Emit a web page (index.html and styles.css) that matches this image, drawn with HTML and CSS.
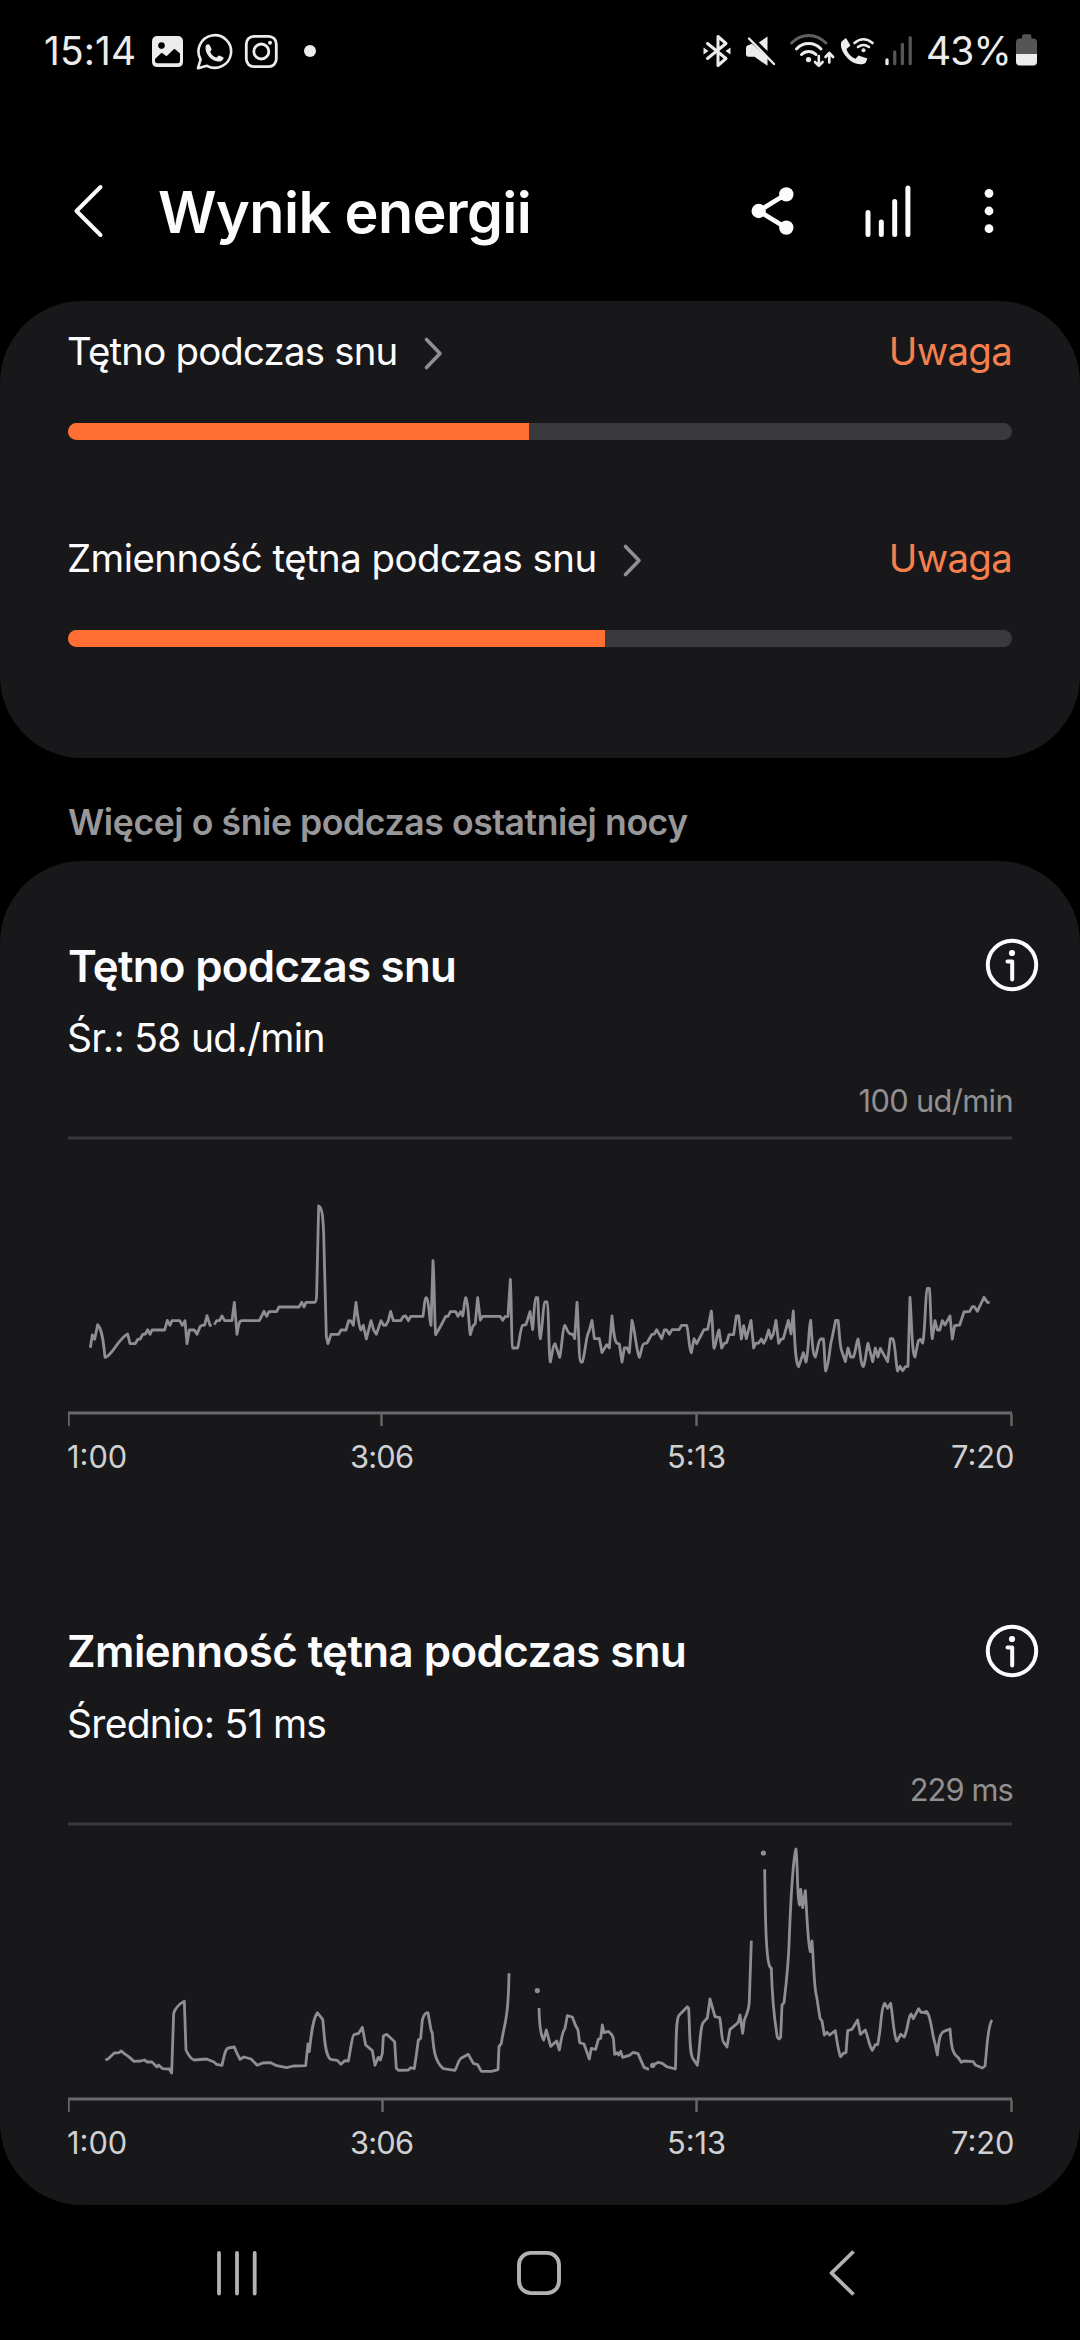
FILE: index.html
```html
<!DOCTYPE html>
<html lang="pl">
<head>
<meta charset="utf-8">
<title>Wynik energii</title>
<link rel="stylesheet" href="styles.css">
</head>
<body>
<div class="screen">
  <div class="status">
    <span class="time">15:14</span>
    <svg class="s-photo" width="32" height="38" viewBox="152 32 32 38"><path fill="#ececec" fill-rule="evenodd" d="M157.500 36H177.500Q183 36 183 41.500V61.500Q183 67 177.500 67H157.500Q152 67 152 61.500V41.500Q152 36 157.500 36ZM161.500 42.300A3.300 3.300 0 1 0 161.500 48.900A3.300 3.300 0 1 0 161.500 42.300ZM155 59V61Q155 63.300 157.500 63.300H177.500Q180 63.300 180 61V53.500L175.500 49.500Q174.500 48.700 173.500 49.600L166.500 56.300L162.500 53.200Q161.700 52.600 161 53.200Z"/></svg>
    <svg class="s-wa" width="37" height="38" viewBox="196 32 37 38"><path fill="none" stroke="#ececec" stroke-width="2.600" stroke-linejoin="round" d="M198 68.200L200.600 59.500A16.300 16.300 0 1 1 207 65.800Z"/><path fill="#ececec" d="M205.600 46.200C206.500 44.200 208.800 43.600 209.900 45.500L211.500 48.800C212 50 210.200 51.300 210.300 52.200C211.500 54.700 213.600 56.600 216.200 57.600C217.200 57.400 218 55.500 219.200 55.400L223.200 57.200C224.500 58.300 222.200 61.200 219.500 61.600C212 62 204.300 53.500 205.600 46.200Z"/></svg>
    <svg class="s-ig" width="34" height="38" viewBox="244 32 34 38"><g fill="none" stroke="#ececec" stroke-width="2.800"><rect x="246.300" y="36.400" width="30" height="30.200" rx="7.500"/><circle cx="261.300" cy="51.500" r="7.500"/></g><circle cx="270" cy="42.800" r="2" fill="#ececec"/></svg>
    <i class="more-dot"></i>
    <svg class="s-bt" width="28" height="38" viewBox="703 32 28 38"><path fill="none" stroke="#ececec" stroke-width="3" stroke-linejoin="round" stroke-linecap="round" d="M707.500 43.500L726 58.500L718 65.500V36.500L726 43.500L707.500 58.500"/><path fill="#ececec" d="M703.500 47.500L708.500 51L703.500 54.500ZM730.500 47.500L725.500 51L730.500 54.500Z"/></svg>
    <svg class="s-mute" width="30" height="38" viewBox="746 32 30 38"><path fill="#ececec" d="M767.500 36.500V51L758.800 42.500ZM747.500 45.500Q746 46 746 48V54.500Q746 56.800 748.300 56.800H754.500L767.500 65.800V58L752 43.800Z"/><path stroke="#ececec" stroke-width="2.400" stroke-linecap="round" d="M749 38.500L774 64"/></svg>
    <svg class="s-wifi" width="47" height="38" viewBox="789 32 47 38"><g fill="none" stroke-width="3" stroke-linecap="round"><path stroke="#606060" d="M791.500 43Q799 35.500 808.700 35.500T826 43"/><path stroke="#ececec" d="M796.500 49Q801.500 43.500 808.700 43.500T821 49M801.500 54.500Q804.500 51.500 808.700 51.500T816 54.500"/></g><circle cx="808.500" cy="59.600" r="2.600" fill="#ececec"/><path fill="none" stroke="#ececec" stroke-width="2.600" stroke-linecap="round" stroke-linejoin="round" d="M818.800 56V65.500M815 62L818.800 65.800L822.600 62M829.300 62.500V53.500M825.500 57L829.300 53L833.100 57"/></svg>
    <svg class="s-call" width="35" height="38" viewBox="840 32 35 38"><path fill="#ececec" d="M841.500 41.500L846 38L850.500 45.500L846.500 49C848 54 851 57 855.500 58.800L858.500 55.500L867.500 58.500L865.500 63C862 65.500 855 64.500 849.500 60C843 54.500 839.500 47 841.500 41.500Z"/><g fill="none" stroke="#ececec" stroke-width="2.600" stroke-linecap="round"><path d="M854.500 43Q863.500 35.500 872.500 43M858 47Q863.500 43 869 47"/></g><circle cx="863.500" cy="50.300" r="2" fill="#ececec"/></svg>
    <svg class="s-signal" width="28" height="38" viewBox="885 32 28 38"><g fill="none" stroke-width="3.300" stroke-linecap="round"><path stroke="#ececec" d="M887 60V63.700"/><path stroke="#555" d="M894.700 52V63.700M902.400 44.300V63.700M910.200 37.700V63.700"/></g></svg>
    <span class="percent">43%</span>
    <svg class="s-bat" width="22" height="38" viewBox="1016 32 22 38"><path fill="#555" d="M1022 36.500Q1022 34.200 1024 34.200H1029.500Q1031.400 34.200 1031.400 36.500V38.500H1034Q1037 39 1037 42V62Q1037 66 1033 66H1020Q1016 66 1016 62V42Q1016 39 1019 38.500H1022Z"/><path fill="#ececec" d="M1016 54H1037V61.500Q1037 65.300 1033 65.300H1020Q1016 65.300 1016 61.500Z"/></svg>
  </div>

  <header class="header">
    <svg class="back" width="34" height="60" viewBox="72 181 34 60"><path d="M100.500 187L76.500 211L100.500 235" fill="none" stroke="#fcfcff" stroke-width="4" stroke-linecap="round" stroke-linejoin="round"/></svg>
    <h1>Wynik energii</h1>
    <svg class="share" width="44" height="60" viewBox="751 181 44 60"><path d="M786 194.300L758.700 211L786 227.700" fill="none" stroke="#fcfcff" stroke-width="4.600"/><g fill="#fcfcff"><circle cx="758.700" cy="211" r="7.200"/><circle cx="786.300" cy="194.400" r="7.200"/><circle cx="786.300" cy="227.600" r="7.200"/></g></svg>
    <svg class="trend" width="46" height="60" viewBox="865 181 46 60"><path d="M868 212.500V234.500M881.300 222V234.500M894.700 201.500V234.500M907.900 188V234.500" fill="none" stroke="#fcfcff" stroke-width="5" stroke-linecap="round"/></svg>
    <svg class="menu" width="12" height="60" viewBox="983 181 12 60"><g fill="#fcfcff"><circle cx="989" cy="193.300" r="4.400"/><circle cx="989" cy="211" r="4.400"/><circle cx="989" cy="228.700" r="4.400"/></g></svg>
  </header>

  <section class="card factors">
    <div class="factor">
      <div class="factor-row"><span class="factor-name first">Tętno podczas snu</span><svg width="22" height="40" viewBox="0 0 22 40"><path class="chevron" d="M3.500 6.500L17 20.500L3.500 34.500"/></svg><span class="state">Uwaga</span></div>
      <div class="track"><div class="fill" style="width:461px"></div></div>
    </div>
    <div class="factor">
      <div class="factor-row"><span class="factor-name">Zmienność tętna podczas snu</span><svg width="22" height="40" viewBox="0 0 22 40"><path class="chevron" d="M3.500 6.500L17 20.500L3.500 34.500"/></svg><span class="state">Uwaga</span></div>
      <div class="track"><div class="fill" style="width:537px"></div></div>
    </div>
  </section>

  <h2 class="section-title">Więcej o śnie podczas ostatniej nocy</h2>

  <section class="card details">
    <article class="metric">
      <div class="metric-head"><h3>Tętno podczas snu</h3>
        <svg width="54" height="54" viewBox="0 0 54 54"><circle cx="27" cy="27" r="24.200" fill="none" stroke="#fcfcff" stroke-width="4"/><circle cx="27" cy="15" r="3.100" fill="#fcfcff"/><path d="M22.500 23.500H27.200V41.500" fill="none" stroke="#fcfcff" stroke-width="4" stroke-linecap="round" stroke-linejoin="round"/></svg></div>
      <p class="average">Śr.: 58 ud./min</p>
      <p class="maximum">100 ud/min</p>
      <svg class="chart" width="945" height="310" viewBox="68 1121 945 310">
        <path class="grid" d="M68 1138H1012"/>
        <path class="axis" d="M68 1413H1012"/>
        <path class="tick" d="M68.500 1414V1426M381.500 1414V1426M696.500 1414V1426M1011.500 1414V1426"/>
        <g class="line">
          <path transform="translate(60 1180) scale(.33333)" d="M91 503L97 465L104 478L113 434C125 445 130 480 135 532C155 530 175 475 203 462L210 491H226L233 478L241 477L248 463L256 462L263 449L270 463L276 450H314L322 421L330 436L336 422H359L367 436L375 422L381 491L388 450H403L411 463L420 440L426 436L434 435L441 407L450 436L455 437M463 434L470 422H479L486 408L494 422H516L523 367L531 463C536 430 538 422 545 422H598L612 394L620 409L627 395H650L657 381H717L725 367L732 381L738 367H764C768 367 770 360 770 340L776 78C786 80 789 110 791 160L799 470L804 491L813 463H836L843 450H858L866 422L873 423L880 436L888 367C892 400 896 440 903 450L910 436L919 477L933 422L941 450L949 463L963 422L971 436L978 435L985 422L992 394L1000 422H1021"/>
          <path transform="translate(400 1220) scale(.33333)" d="M-1 302H2L10 289L17 288L25 302L32 289H69C73 260 74 233 79 233C88 240 86 290 93 316L99 122C104 200 103 300 107 344L120 322L137 289H144L151 275H167L174 289L182 275L188 288C192 270 194 235 197 233C206 245 206 320 211 344L218 320L226 310L233 233L241 300L248 289H301L308 301L315 290L324 289L331 178C335 240 334 380 338 384H353C358 365 362 320 368 316L378 314L390 275L398 329C402 290 403 235 408 233H413C416 260 416 350 421 356C428 320 430 247 434 246H441C447 250 445 400 451 426C457 405 458 372 465 371L479 412C486 385 488 318 494 316C500 322 503 342 512 342L519 343L524 356L531 247C537 330 536 425 543 426H547C556 400 558 345 567 334L576 301L583 356H598L606 398L620 374L628 384L636 288C641 340 644 368 652 370L658 372L666 426L673 384H681L688 398L696 301C705 330 710 400 718 412C724 400 725 371 733 371L741 369L755 344L763 342L770 329L785 356L793 330H800L808 343L816 329H837L845 316H860C866 335 868 395 874 398L882 356L890 371L901 350"/>
          <path transform="translate(700 1260) scale(.33333)" d="M0 232L12 209L23 208L34 153C38 180 39 262 42 265C48 260 52 212 57 210L65 264L73 250L80 248L87 224H101L109 168H116L124 237L131 197L139 236L153 181L161 264L167 250L176 249L184 237L191 250L198 237L206 210L213 236L220 222L228 181L236 250L243 238L250 236L265 181L273 222L280 153C284 230 285 310 296 320L310 278L318 306C326 280 327 185 332 181C336 230 338 290 346 291C354 270 354 240 362 237H370C374 260 374 330 377 333C390 300 388 260 396 235L407 181H414C418 200 418 260 426 275L436 305L444 264L452 291H460C468 275 470 240 474 237C480 260 482 318 490 320C498 305 500 252 504 250L518 305L526 264L534 291L541 265L563 305L571 236H578C586 245 588 325 593 333L600 319L608 332L616 320L624 319L630 112C636 200 636 285 645 291L655 242L661 238L668 249C676 220 676 90 682 85H688C692 110 692 220 697 236L705 182L712 210H719L727 182L735 195L742 182L750 168L757 237L764 197L779 195L792 156L809 154L817 140H823L832 154L852 112L862 127L869 128"/>
        </g>
      </svg>
      <div class="hours"><span>1:00</span><span>3:06</span><span>5:13</span><span>7:20</span></div>
    </article>

    <article class="metric variability">
      <div class="metric-head"><h3>Zmienność tętna podczas snu</h3>
        <svg width="54" height="54" viewBox="0 0 54 54"><circle cx="27" cy="27" r="24.200" fill="none" stroke="#fcfcff" stroke-width="4"/><circle cx="27" cy="15" r="3.100" fill="#fcfcff"/><path d="M22.500 23.500H27.200V41.500" fill="none" stroke="#fcfcff" stroke-width="4" stroke-linecap="round" stroke-linejoin="round"/></svg></div>
      <p class="average">Średnio: 51 ms</p>
      <p class="maximum">229 ms</p>
      <svg class="chart" width="945" height="310" viewBox="68 1807 945 310">
        <path class="grid" d="M68 1824H1012"/>
        <path class="axis" d="M68 2099H1012"/>
        <path class="tick" d="M68.500 2100V2112M382.500 2100V2112M696.500 2100V2112M1011.500 2100V2112"/>
        <g class="line">
          <path transform="translate(60 1940) scale(.33333)" d="M136 360L144 357L163 339L177 338L184 333L192 340L206 350L222 364L242 363L253 360L262 366L276 366L291 381L296 375L308 386L328 387L335 399L341 220C344 210 355 193 373 184L378 330C385 345 393 357 402 360L440 357L462 366L470 373L486 376C492 350 496 325 505 324L523 321L529 336L540 358L552 351L573 357L592 376L608 369L632 368L650 377L680 383L700 378L737 377L744 312L748 335C753 290 757 240 772 218L788 238C793 270 792 345 812 358L832 361L843 373L854 362L865 363C872 330 876 286 882 284L896 280L907 262L917 315L937 332L945 376L955 352L961 360L967 340L970 288L980 283L1004 305L1009 385L1015 391L1045 390L1052 383L1063 386L1069 345L1075 300L1082 295L1087 240C1092 222 1096 218 1104 218L1113 270L1117 280C1120 320 1123 365 1150 386L1185 391C1192 380 1196 355 1206 353L1225 343L1240 370L1253 374L1264 394H1295L1314 389L1317 320L1324 310C1330 260 1345 250 1347 100"/>
          <path transform="translate(500 1820) scale(.33333)" d="M117 564C118 610 124 650 131 660L139 630L152 679L170 663L178 690C184 660 186 635 195 625L202 587L217 591L226 615L234 630L239 668L252 672L268 717L274 685L287 688L295 658L302 655L307 615L312 638L325 634C335 640 342 655 341 665L344 703L352 698L356 705L362 694L368 712L388 706L400 697L414 701L432 742L447 748M458 736L475 727L487 730L500 740L526 747C530 680 525 590 540 583L562 560L566 565C570 640 568 705 580 718L592 736C600 690 600 610 612 605L622 594L630 537L645 590L659 593C665 620 664 665 672 668L681 681L690 628L712 610L716 603L720 585L728 640L733 600C740 585 748 565 748 540L754 362"/>
          <path transform="translate(740 1820) scale(.33333)" d="M74 148C76 300 78 420 90 441L94 445C97 560 105 610 112 652L117 657L122 652L126 555L132 548C140 480 146 430 148 350C152 250 158 120 168 87C174 150 171 240 179 255L182 208L188 263L196 212C201 280 203 370 211 395L216 363C222 440 222 505 230 530L240 595L246 603L253 645L261 637L269 645L286 632C292 670 296 700 302 710L310 700L318 698L323 632L336 628L353 600L361 643L376 630C384 650 388 680 397 691L406 674L413 674C425 620 422 560 434 550L443 565L452 550C460 600 462 655 471 664L482 643L493 651C505 625 504 590 513 582L520 596L536 566L543 577H562C575 600 575 640 585 670L592 705C596 670 598 640 612 634L630 627C634 670 634 700 655 713L664 727L672 723L700 725L706 735L727 744L735 738C742 680 742 620 756 600"/>
        </g>
        <g fill="#8e8e93"><circle cx="537.300" cy="1990.600" r="2.600"/><circle cx="652.700" cy="2065.400" r="2.600"/><circle cx="763.400" cy="1853" r="2.600"/><circle cx="926" cy="2012.300" r="2.300"/></g>
      </svg>
      <div class="hours"><span>1:00</span><span>3:06</span><span>5:13</span><span>7:20</span></div>
    </article>
  </section>

  <nav class="navbar">
    <svg width="44" height="50" viewBox="215 2248 44 50"><path d="M219 2253V2293.500M237 2253V2293.500M254.700 2253V2293.500" fill="none" stroke="#b2b2b2" stroke-width="3.800" stroke-linecap="round"/></svg>
    <svg class="home" width="48" height="50" viewBox="515 2248 48 50"><rect x="519" y="2252.900" width="40" height="40.200" rx="12" fill="none" stroke="#b2b2b2" stroke-width="3.900"/></svg>
    <svg class="nav-back" width="30" height="50" viewBox="828 2248 30 50"><path d="M853.500 2251.500L831.500 2273L853.500 2294.500" fill="none" stroke="#b2b2b2" stroke-width="3.800" stroke-linejoin="round"/></svg>
  </nav>
</div>
</body>
</html>
```
FILE: styles.css
```css
* { box-sizing: border-box; }

body {
  margin: 0;
  background: #000;
  color: #fcfcff;
  font-family: Inter, Roboto, sans-serif;
}

h1, h2, h3, p { margin: 0; white-space: nowrap; }

svg { display: block; flex: none; }

.screen {
  width: 1080px;
  height: 2340px;
  display: flex;
  flex-direction: column;
  overflow: hidden;
}

/* Status bar */
.status {
  height: 102px;
  flex: none;
  display: flex;
  align-items: center;
  padding: 0 42px 0 44px;
  color: #ececec;
  font-size: 38.9px;
  line-height: 50px;
}
.time { width: 108px; letter-spacing: 0.1px; }
.s-wa { margin-left: 12px; }
.s-ig { margin-left: 11px; }
.more-dot { width: 12px; height: 12px; margin-left: 26px; border-radius: 50%; background: #ececec; }
.s-bt { margin-left: auto; }
.s-mute { margin-left: 15px; }
.s-wifi { margin-left: 13px; }
.s-call { margin-left: 4px; }
.s-signal { margin-left: 10px; }
.percent { width: 90px; margin-left: 13px; letter-spacing: -0.8px; }

/* App bar */
.header {
  height: 199px;
  flex: none;
  display: flex;
  align-items: center;
  padding: 19px 85px 0 72px;
}
.header h1 {
  margin-left: 52px;
  padding-top: 2px;
  font-size: 57.5px;
  line-height: 70px;
  font-weight: 600;
  letter-spacing: -0.57px;
}
.share { margin-left: auto; }
.trend { margin-left: 70px; }
.menu { margin-left: 72px; }

/* Cards */
.card {
  flex: none;
  background: #18181a;
  border-radius: 82px;
}

.factors { height: 457px; padding: 20px 68px 0; }
.factor + .factor { margin-top: 88px; }
.factor-row {
  height: 60px;
  display: flex;
  align-items: center;
  font-size: 38.4px;
}
.factor-name { margin-left: -1px; letter-spacing: -0.53px; }
.factor-name.first { letter-spacing: -0.8px; }
.factor-row svg { margin: 4px 0 0 25px; }
.chevron { fill: none; stroke: #909092; stroke-width: 3.6; stroke-linecap: round; stroke-linejoin: round; }
.state { margin-left: auto; color: #f5804e; letter-spacing: -0.7px; }
.track {
  height: 17px;
  margin-top: 42px;
  border-radius: 9px;
  background: #3a3a3c;
  overflow: hidden;
}
.fill { height: 100%; background: #ff6e33; }

.section-title {
  height: 103px;
  flex: none;
  padding: 26px 68px 0;
  color: #98989a;
  font-size: 35.6px;
  line-height: 77px;
  font-weight: 600;
  letter-spacing: -0.42px;
}

/* Sleep metrics */
.details { height: 1344px; padding: 74px 41px 0 68px; }
.variability { margin-top: 144px; }
.metric-head {
  height: 60px;
  display: flex;
  align-items: center;
  justify-content: space-between;
}
.metric-head h3 {
  padding-top: 3px;
  font-size: 43.8px;
  line-height: 56px;
  font-weight: 600;
  letter-spacing: -0.7px;
}
.variability h3 { padding-top: 2px; margin-left: -1px; letter-spacing: -0.56px; }
.average {
  margin: 18px 0 0 -1px;
  font-size: 39px;
  line-height: 50px;
  letter-spacing: -0.7px;
}
.maximum {
  height: 40px;
  margin: 18px 26px 0 0;
  color: #909092;
  font-size: 30.8px;
  line-height: 40px;
  letter-spacing: -0.64px;
  text-align: right;
}
.variability .maximum { padding-top: 3px; letter-spacing: -0.87px; }
.grid { fill: none; stroke: #38383a; stroke-width: 3; }
.axis { fill: none; stroke: #68686a; stroke-width: 3; }
.tick { fill: none; stroke: #68686a; stroke-width: 2.4; }
.line { fill: none; stroke: #8e8e93; stroke-width: 8.4; stroke-linejoin: round; }
.hours {
  display: grid;
  grid-template-columns: 282px 317px 284px 62px;
  height: 40px;
  margin-top: 6px;
  color: #d0d0d2;
  font-size: 30.8px;
  line-height: 40px;
}
.hours span:nth-child(2) { letter-spacing: -0.78px; }
.hours span:first-child { margin-left: -1px; }

/* Navigation bar */
.navbar {
  flex: 1;
  display: flex;
  align-items: center;
  padding-left: 215px;
}
.home { margin-left: 256px; }
.nav-back { margin-left: 265px; }
```
